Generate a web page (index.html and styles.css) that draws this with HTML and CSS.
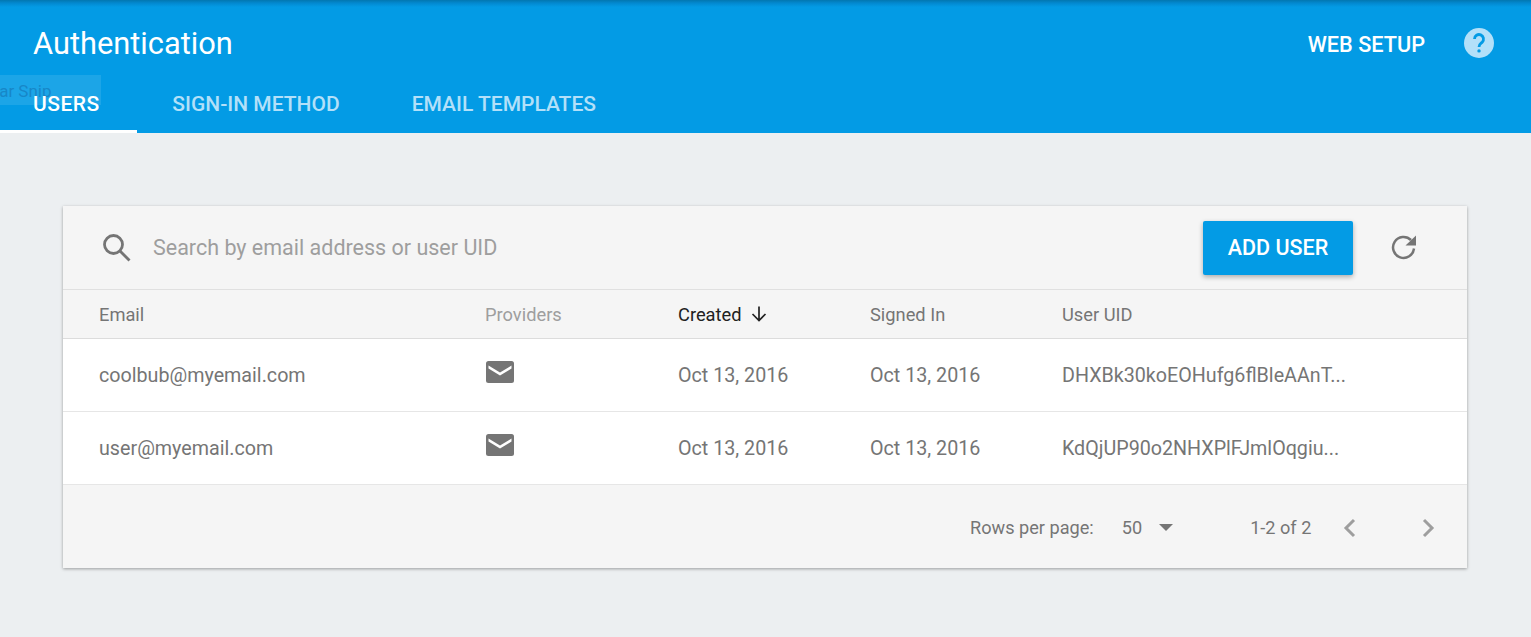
FILE: index.html
```html
<!DOCTYPE html>
<html lang="en">
<head>
<meta charset="utf-8">
<title>Authentication</title>
<link rel="stylesheet" href="styles.css">
</head>
<body>
<header class="appbar">
  <div class="appbar-top">
    <h1 class="title">Authentication</h1>
    <div class="appbar-actions">
      <a class="web-setup">WEB SETUP</a>
      <svg class="help" width="30" height="30" viewBox="0 0 30 30" aria-hidden="true">
        <circle cx="15" cy="15" r="15" fill="#b3e0f9"/>
        <path d="M10.500 11a4.500 4.500 0 1 1 7.700 3.200c-1.500 1.500-3.200 2-3.200 4.800" fill="none" stroke="#039be5" stroke-width="2.800"/>
        <circle cx="15" cy="22.900" r="1.700" fill="#039be5"/>
      </svg>
    </div>
  </div>
  <nav class="tabs">
    <a class="tab tab-active">USERS</a>
    <a class="tab">SIGN-IN METHOD</a>
    <a class="tab">EMAIL TEMPLATES</a>
  </nav>
  <div class="snip">lar Snip</div>
</header>
<main class="content">
  <section class="card">
    <div class="toolbar">
      <svg class="search-icon" width="30" height="30" viewBox="0 0 30 30" aria-hidden="true">
        <circle cx="11.500" cy="11.500" r="9" fill="none" stroke="#757575" stroke-width="2.800"/>
        <path d="M18 18 27.500 27.500" stroke="#757575" stroke-width="2.800" fill="none"/>
      </svg>
      <span class="search-text">Search by email address or user UID</span>
      <button class="add-user">ADD USER</button>
      <svg class="refresh" width="26" height="26" viewBox="0 0 26 26" aria-hidden="true">
        <path d="M20 5A10.500 10.500 0 1 0 23 13.500" fill="none" stroke="#757575" stroke-width="2.500"/>
        <path d="M25 .5V10.500H14.500z" fill="#757575"/>
      </svg>
    </div>
    <div class="grid-row head-row">
      <span>Email</span>
      <span class="col-muted">Providers</span>
      <span class="col-sorted">Created
        <svg class="sort-arrow" width="16" height="16" viewBox="0 0 16 16" aria-hidden="true">
          <path d="M8 .5V14.500M1.500 8 8 14.500 14.500 8" fill="none" stroke="#212121" stroke-width="1.700"/>
        </svg>
      </span>
      <span>Signed In</span>
      <span>User UID</span>
    </div>
    <div class="grid-row body-row">
      <span>coolbub@myemail.com</span>
      <svg class="mail" width="28" height="22" viewBox="0 0 28 22" aria-hidden="true">
        <rect width="28" height="22" rx="2.500" fill="#757575"/>
        <path d="M2.500 4.500 14 11.500 25.500 4.500V7.500L14 14.500 2.500 7.500z" fill="#fff"/>
      </svg>
      <span>Oct 13, 2016</span>
      <span>Oct 13, 2016</span>
      <span>DHXBk30koEOHufg6flBleAAnT...</span>
    </div>
    <div class="grid-row body-row">
      <span>user@myemail.com</span>
      <svg class="mail" width="28" height="22" viewBox="0 0 28 22" aria-hidden="true">
        <rect width="28" height="22" rx="2.500" fill="#757575"/>
        <path d="M2.500 4.500 14 11.500 25.500 4.500V7.500L14 14.500 2.500 7.500z" fill="#fff"/>
      </svg>
      <span>Oct 13, 2016</span>
      <span>Oct 13, 2016</span>
      <span>KdQjUP90o2NHXPlFJmlOqgiu...</span>
    </div>
    <div class="pager">
      <span>Rows per page:</span>
      <span class="rows-value">50</span>
      <span class="rows-caret"></span>
      <span class="range">1-2 of 2</span>
      <svg class="chev chev-prev" width="14" height="20" viewBox="0 0 14 20" aria-hidden="true">
        <path d="M12 2 4 10l8 8" fill="none" stroke="#9e9e9e" stroke-width="3"/>
      </svg>
      <svg class="chev chev-next" width="14" height="20" viewBox="0 0 14 20" aria-hidden="true">
        <path d="m3 2 8 8-8 8" fill="none" stroke="#9e9e9e" stroke-width="3"/>
      </svg>
    </div>
  </section>
</main>
</body>
</html>
```
FILE: styles.css
```css
html, body {
  margin: 0;
  height: 100%;
}
body {
  background: #eceff1;
  font-family: Roboto, "Liberation Sans", sans-serif;
  color: #757575;
  overflow: hidden;
}
.appbar {
  position: relative;
  height: 133px;
  background: linear-gradient(#0277b0 0, #0288cf 3px, #039be5 7px);
  display: flex;
  flex-direction: column;
  justify-content: space-between;
}
.appbar-top {
  display: flex;
  align-items: flex-start;
  justify-content: space-between;
  padding: 28px 37px 0 33px;
}
.title {
  margin: 0;
  padding-top: 1px;
  font-size: 30.800px;
  line-height: 30px;
  font-weight: 400;
  color: #fff;
}
.appbar-actions {
  display: flex;
  align-items: center;
  gap: 39px;
}
.web-setup {
  color: #fff;
  padding-top: 2px;
  font-size: 21.700px;
  font-weight: 500;
}
.help {
  display: block;
}
.tabs {
  display: flex;
  position: relative;
  z-index: 1;
}
.tab {
  padding: 5px 36px 11px;
  height: 30px;
  line-height: 30px;
  font-size: 21px;
  font-weight: 500;
  color: #b3e0f9;
  border-bottom: 3px solid transparent;
}
.tab-active {
  color: #fff;
  padding-left: 33px;
  padding-right: 37.500px;
  letter-spacing: 0.5px;
  border-bottom-color: #fff;
}
.tab-active + .tab {
  margin-left: -1px;
}
.snip {
  position: absolute;
  left: 0;
  top: 75px;
  width: 101px;
  height: 30px;
  background: rgba(255, 255, 255, 0.1);
  overflow: hidden;
  color: #1787c8;
  font-size: 17px;
  line-height: 33px;
  text-indent: -5px;
}
.content {
  padding: 73px 64px 0 63px;
}
.card {
  background: #f5f5f5;
  box-shadow: 0 1px 3px rgba(0, 0, 0, 0.35);
}
.toolbar {
  height: 83px;
  display: flex;
  align-items: center;
  padding: 0 50px 0 39px;
  border-bottom: 1px solid #e0e0e0;
}
.search-text {
  flex: 1;
  margin-left: 21px;
  font-size: 21.500px;
  color: #9e9e9e;
}
.search-icon {
  display: block;
}
.add-user {
  width: 150px;
  height: 54px;
  border: 0;
  border-radius: 2px;
  background: #039be5;
  color: #fff;
  font-family: inherit;
  font-size: 21.500px;
  font-weight: 500;
  box-shadow: 0 2px 5px rgba(0, 0, 0, 0.3);
}
.refresh {
  display: block;
  margin-left: 38px;
}
.grid-row {
  display: grid;
  grid-template-columns: 386px 193px 192px 192px 1fr;
  align-items: center;
  padding-left: 36px;
}
.head-row {
  height: 48px;
  font-size: 18.300px;
  font-weight: 400;
  border-bottom: 1px solid #dcdcdc;
}
.col-muted {
  color: #9e9e9e;
}
.col-sorted {
  color: #212121;
  display: flex;
  align-items: center;
  gap: 9px;
}
.sort-arrow {
  display: block;
}
.body-row {
  height: 72px;
  background: #fff;
  font-size: 19.700px;
  border-bottom: 1px solid #e6e6e6;
}
.mail {
  display: block;
  margin: -6px 0 0 1px;
}
.pager {
  box-sizing: border-box;
  height: 83px;
  display: flex;
  align-items: center;
  padding: 2px 0 0 907px;
  font-size: 18.150px;
}
.rows-value {
  margin-left: 28px;
}
.rows-caret {
  margin-left: 17px;
  width: 0;
  height: 0;
  border-left: 7.500px solid transparent;
  border-right: 7.500px solid transparent;
  border-top: 7.500px solid #757575;
}
.range {
  margin-left: 77px;
}
.chev {
  display: block;
}
.chev-prev {
  margin-left: 31px;
}
.chev-next {
  margin-left: 65px;
}
```
